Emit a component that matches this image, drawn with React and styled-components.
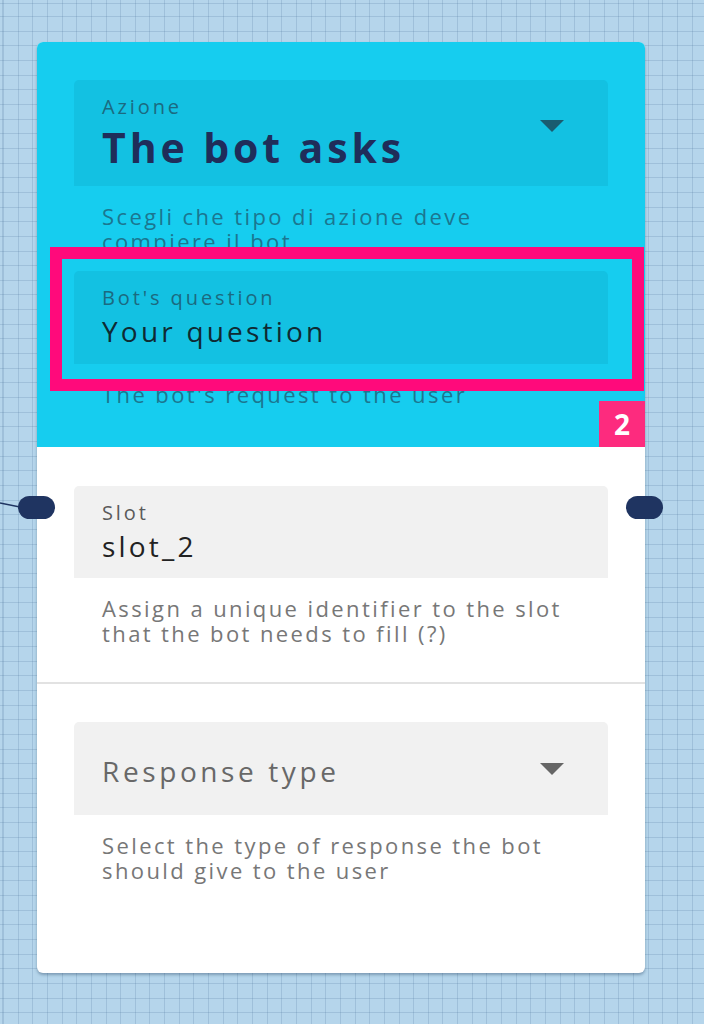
import React from 'react';
import styled, { createGlobalStyle } from 'styled-components';

const GlobalStyle = createGlobalStyle`
  html, body {
    margin: 0;
    padding: 0;
  }
  body {
    width: 704px;
    height: 1024px;
    overflow: hidden;
    font-family: "Open Sans", "Liberation Sans", sans-serif;
    background-color: #b5d5eb;
    background-image:
      repeating-linear-gradient(90deg, rgba(70, 110, 150, 0.2) 0 1px, transparent 1px 14.65px),
      repeating-linear-gradient(0deg, rgba(70, 110, 150, 0.2) 0 1px, transparent 1px 14.65px);
    background-position: 3px 4px;
  }
`;

const Canvas = styled.div`
  position: relative;
  padding: 42px 0 0 37px;
`;

const Wire = styled.svg`
  position: absolute;
  left: 0;
  top: 496px;
`;

const Card = styled.div`
  position: relative;
  width: 608px;
  border-radius: 6px;
  background: #ffffff;
  box-shadow: 0 2px 3px rgba(20, 50, 80, 0.35);
`;

const Header = styled.section`
  position: relative;
  box-sizing: border-box;
  height: 405px;
  padding: 38px 37px 0;
  background: #16cdef;
  border-radius: 6px 6px 0 0;
`;

const Body = styled.section`
  padding: ${p => p.$pad};
  border-bottom: ${p => (p.$divider ? '2px solid #e2e2e2' : 'none')};
`;

const Field = styled.div`
  box-sizing: border-box;
  display: flex;
  align-items: center;
  min-height: ${p => p.$h}px;
  padding: 15px 28px;
  border-radius: 5px 5px 0 0;
  background: ${p => (p.$tone === 'cyan' ? '#13c1e2' : '#f1f1f1')};
`;

const FieldText = styled.div`
  flex: 1;
  display: flex;
  flex-direction: column;
  align-self: flex-start;
`;

const Label = styled.div`
  font-size: 20px;
  line-height: 24px;
  letter-spacing: 2.9px;
  margin-bottom: 4px;
  color: ${p => (p.$tone === 'cyan' ? '#1b6a80' : '#5a5a5a')};
`;

const Value = styled.div`
  font-size: 28px;
  line-height: 34px;
  letter-spacing: 3.2px;
  color: ${p => (p.$tone === 'cyan' ? '#0f2a33' : '#222222')};
`;

const Title = styled.div`
  font-size: 41px;
  line-height: 48px;
  font-weight: 700;
  letter-spacing: 3.9px;
  color: #1f2d5a;
`;

const Placeholder = styled.div`
  flex: 1;
  font-size: 28px;
  line-height: 34px;
  letter-spacing: 3.6px;
  color: #686868;
  margin-top: 4px;
`;

const Caret = styled.svg`
  flex: none;
  margin-right: 16px;
  margin-top: ${p => p.$shift || 0}px;
`;

const Helper = styled.p`
  margin: 18px 0 0;
  padding: 0 28px;
  font-size: 22px;
  line-height: 25px;
  letter-spacing: 2.4px;
  color: ${p => (p.$tone === 'cyan' ? '#1b7690' : '#777777')};
`;

const Highlight = styled.div`
  position: absolute;
  left: 13px;
  top: 205px;
  width: 594px;
  height: 144px;
  box-sizing: border-box;
  border: 12px solid #ff0a7b;
  pointer-events: none;
`;

const Badge = styled.div`
  position: absolute;
  right: 0;
  bottom: 0;
  width: 46px;
  height: 46px;
  display: flex;
  align-items: center;
  justify-content: center;
  background: #fd2b7e;
  color: #ffffff;
  font-size: 28px;
  font-weight: 700;
`;

const Port = styled.div`
  position: absolute;
  top: 454px;
  ${p => (p.$side === 'left' ? 'left: -19px;' : 'right: -18px;')}
  width: 37px;
  height: 23px;
  border-radius: 12px;
  background: #1f3461;
`;

function Arrow({ color, shift }) {
  return (
    <Caret width="24" height="12" viewBox="0 0 24 12" $shift={shift}>
      <polygon points="0,0 24,0 12,12" fill={color} />
    </Caret>
  );
}

export default function App() {
  return (
    <>
      <GlobalStyle />
      <Canvas>
        <Wire width="20" height="14" viewBox="0 0 20 14">
          <path d="M0 7 L20 11" stroke="#1f3461" strokeWidth="1.5" fill="none" />
        </Wire>
        <Card>
          <Header>
            <Field $tone="cyan" $h={106}>
              <FieldText>
                <Label $tone="cyan">Azione</Label>
                <Title>The bot asks</Title>
              </FieldText>
              <Arrow color="#1a5c70" shift={-14} />
            </Field>
            <Helper $tone="cyan">
              Scegli che tipo di azione deve
              <br />
              compiere il bot
            </Helper>
            <Field $tone="cyan" $h={93} style={{ marginTop: 17 }}>
              <FieldText>
                <Label $tone="cyan">Bot's question</Label>
                <Value $tone="cyan">Your question</Value>
              </FieldText>
            </Field>
            <Helper $tone="cyan">The bot's request to the user</Helper>
            <Highlight />
            <Badge>2</Badge>
          </Header>

          <Body $pad="39px 37px 36px" $divider>
            <Field $h={92}>
              <FieldText>
                <Label>Slot</Label>
                <Value>slot_2</Value>
              </FieldText>
            </Field>
            <Helper>
              Assign a unique identifier to the slot
              <br />
              that the bot needs to fill (?)
            </Helper>
          </Body>

          <Body $pad="38px 37px 90px">
            <Field $h={93}>
              <Placeholder>Response type</Placeholder>
              <Arrow color="#666666" />
            </Field>
            <Helper>
              Select the type of response the bot
              <br />
              should give to the user
            </Helper>
          </Body>

          <Port $side="left" />
          <Port $side="right" />
        </Card>
      </Canvas>
    </>
  );
}
